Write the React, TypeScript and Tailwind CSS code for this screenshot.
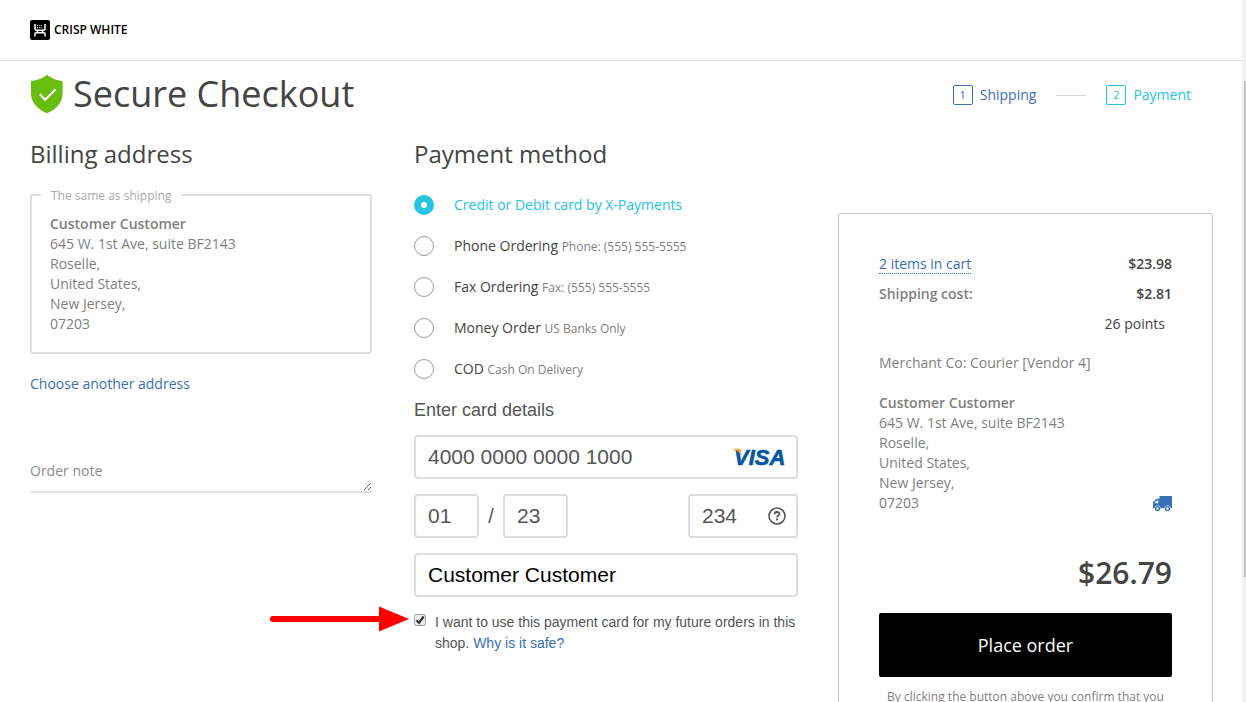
import { useState } from 'react';

const addressLines = ['645 W. 1st Ave, suite BF2143', 'Roselle,', 'United States,', 'New Jersey,', '07203'];

const paymentMethods = [
  { id: 'xpayments', name: 'Credit or Debit card by X-Payments', note: '' },
  { id: 'phone', name: 'Phone Ordering', note: 'Phone: (555) 555-5555' },
  { id: 'fax', name: 'Fax Ordering', note: 'Fax: (555) 555-5555' },
  { id: 'money', name: 'Money Order', note: 'US Banks Only' },
  { id: 'cod', name: 'COD', note: 'Cash On Delivery' },
];

const cardInput =
  'h-11 rounded border-2 border-[#dddddd] bg-white pl-3 font-["Liberation_Sans",sans-serif] text-[21px] outline-none';

// Icons
const LogoIcon = () => (
  <svg width="20" height="20" viewBox="0 0 20 20" fill="none" aria-hidden="true">
    <rect width="20" height="20" rx="2" fill="#000" />
    <g stroke="#fff" strokeWidth="1.5">
      <path d="M5 4v4.500c0 1.300.8 1.700 2 1.700h6c1.200 0 2-.4 2-1.700V4" />
      <path d="M7.800 10.200c0 2.200-.8 2.800-2.800 3v3.400M12.200 10.200c0 2.200.8 2.800 2.800 3v3.400M6.500 12.800h7" strokeWidth="1.400" />
      <path d="M7 5.500h6M7 7.600h6" stroke="#aaa" strokeWidth="1.200" strokeDasharray="1.200 .8" />
    </g>
  </svg>
);

const ShieldIcon = () => (
  <svg width="33" height="40" viewBox="0 0 33 40" fill="none" aria-hidden="true">
    <path d="M17 .8C13 4 7 6.600 1 7v12.500C1 28.500 8 35.800 17 39.300c9-3.500 15.600-10.800 15.600-19.800V7C27 6.600 21 4 17 .8z" fill="#69bd0f" />
    <path d="M9.800 20.200l5.400 5.600 10.400-10.600" stroke="#fff" strokeWidth="2" />
  </svg>
);

const TruckIcon = () => (
  <svg width="20" height="18" viewBox="0 0 20 18" aria-hidden="true">
    <path d="M7.500 1H20v12.200H1V8.600L1.300 7l2.600-2.700L5 3.800h2.500z" fill="#3a6eb4" />
    <path d="M2.700 8.300v-.5l2.200-2.400h1.300v2.900z" fill="#fff" />
    <circle cx="5.500" cy="13.500" r="3" fill="#fff" />
    <circle cx="15.500" cy="13.500" r="3" fill="#fff" />
    <circle cx="5.500" cy="13.500" r="1.900" fill="none" stroke="#3a6eb4" strokeWidth="1.400" />
    <circle cx="15.500" cy="13.500" r="1.900" fill="none" stroke="#3a6eb4" strokeWidth="1.400" />
  </svg>
);

const VisaLogo = () => (
  <svg width="56" height="24" viewBox="0 0 56 24" role="img" aria-label="VISA">
    <text x="2" y="18" className='font-["Liberation_Sans",sans-serif] text-[22px] font-bold italic' fill="#0157a2" stroke="#0157a2" strokeWidth=".6">
      VISA
    </text>
    <path d="M0 1.800h6.800c1.200 0 1.800.5 2 1.500L9.800 9C8 5.600 5 3.100 0 1.800z" fill="#f9a533" />
  </svg>
);

const Arrow = () => (
  <svg className="pointer-events-none absolute -left-36 -top-2" width="139" height="26" viewBox="0 0 139 26" aria-hidden="true">
    <path d="M3 13h108" stroke="#f00" strokeWidth="6" strokeLinecap="round" />
    <path d="M109 0.500L139 13l-30 12.500z" fill="#f00" />
  </svg>
);

const Address = () => (
  <address className="text-sm leading-5 text-[#7f7f7f] not-italic">
    <strong className="font-semibold">Customer Customer</strong>
    {addressLines.map((line) => (
      <div key={line}>{line}</div>
    ))}
  </address>
);

const Steps = () => (
  <nav className="flex items-center pt-0.5 text-sm">
    <a href="#shipping" className="flex items-center gap-[7px] text-[#3a6eb4]">
      <span className="flex size-5 items-center justify-center rounded-xs border border-current text-[11px]">1</span>
      Shipping
    </a>
    <span className="mx-5 h-px w-[30px] bg-[#d9d9d9]" />
    <a href="#payment" className="flex items-center gap-[7px] text-[#25c4e0]">
      <span className="flex size-5 items-center justify-center rounded-xs border border-current text-[11px]">2</span>
      Payment
    </a>
  </nav>
);

const BillingAddress = () => (
  <section className="pr-0.5">
    <h2 className="text-2xl leading-8">Billing address</h2>
    <fieldset className="mt-[17px] rounded-xs border-2 border-[#e0e0e0]">
      <legend className="ml-[9px] px-2.5 pt-px text-xs leading-[15px] text-[#aaaaaa]">The same as shipping</legend>
      <div className="px-[18px] pt-[11px] pb-[18px]">
        <Address />
      </div>
    </fieldset>
    <a href="#addresses" className="mt-5 block text-sm leading-5 text-[#3a6eb4]">
      Choose another address
    </a>
    <textarea
      aria-label="Order note"
      placeholder="Order note"
      className="mt-[67px] block h-8 w-full resize-y overflow-hidden rounded-xs border-b-2 border-[#e0e0e0] text-sm leading-5 outline-none placeholder:text-[#8b8b8b]"
    />
  </section>
);

const PaymentMethod = () => {
  const [method, setMethod] = useState('xpayments');
  const [saveCard, setSaveCard] = useState(true);

  return (
    <section>
      <h2 className="text-2xl leading-8">Payment method</h2>
      <div className="mt-3.5">
        {paymentMethods.map(({ id, name, note }) => (
          <label key={id} className="flex h-[41px] items-center gap-5 text-sm has-checked:text-[#25c4e0]">
            <input
              type="radio"
              name="method"
              checked={method === id}
              onChange={() => setMethod(id)}
              className="size-5 appearance-none rounded-full border border-[#999999] checked:border-[7px] checked:border-[#25c4e0]"
            />
            <span className="pt-px">
              {name} {note && <small className="text-xs text-[#7f7f7f]">{note}</small>}
            </span>
          </label>
        ))}
      </div>

      <div className='font-["Liberation_Sans",sans-serif] text-[#555555]'>
        <h3 className="mt-2 text-lg leading-[27px]">Enter card details</h3>
        <div className="relative mt-[11px]">
          <input aria-label="Card number" defaultValue="4000 0000 0000 1000" className={`${cardInput} w-full`} />
          <span className="absolute top-3 right-2.5">
            <VisaLogo />
          </span>
        </div>
        <div className="mt-[15px] flex items-center">
          <input aria-label="Month" defaultValue="01" className={`${cardInput} w-[65px]`} />
          <span className="w-6 text-center text-xl">/</span>
          <input aria-label="Year" defaultValue="23" className={`${cardInput} w-[65px]`} />
          <div className="relative ml-auto">
            <input aria-label="CVV" defaultValue="234" className={`${cardInput} w-[110px]`} />
            <button type="button" aria-label="?" className="absolute top-[13px] right-3">
              <svg width="18" height="18" viewBox="0 0 18 18" fill="none" stroke="#555" aria-hidden="true">
                <circle cx="9" cy="9" r="8" strokeWidth="1.600" />
                <path d="M6.600 7.200c0-1.500 1-2.200 2.400-2.200s2.400.7 2.400 2c0 1.700-2.300 1.500-2.300 3.400" strokeWidth="1.800" />
                <path d="M8.100 12.500H10" strokeWidth="1.900" />
              </svg>
            </button>
          </div>
        </div>
        <input aria-label="Name on card" defaultValue="Customer Customer" className={`${cardInput} mt-[15px] w-full text-black`} />

        <div className="relative mt-[17px] flex gap-[9px] text-sm leading-[21px]">
          <Arrow />
          <span className="relative size-3 shrink-0">
            <input
              id="save-card"
              type="checkbox"
              checked={saveCard}
              onChange={(e) => setSaveCard(e.target.checked)}
              className="peer block size-3 appearance-none rounded-xs border border-[#a8a8a8] bg-[#e9e9e9]"
            />
            <svg className="pointer-events-none absolute inset-0 hidden peer-checked:block" width="12" height="12" viewBox="0 0 12 12" fill="none" stroke="#333" strokeWidth="2.200">
              <path d="M2.500 6.300L5 8.800l4.600-6.300" />
            </svg>
          </span>
          <p className="-mt-0.5">
            <label htmlFor="save-card">I want to use this payment card for my future orders in this shop.</label>{' '}
            <a href="#safe" className="text-[#3a6eb4]">
              Why is it safe?
            </a>
          </p>
        </div>
      </div>
    </section>
  );
};

const OrderSummary = () => (
  <aside className="mt-[75px] rounded-xs border border-[#c4c4c4] p-10 text-sm leading-5">
    <div className="flex flex-col gap-2.5">
      <div className="flex justify-between">
        <a href="#cart" className="border-b border-dotted border-[#3a6eb4] leading-[19px] text-[#3a6eb4]">
          2 items in cart
        </a>
        <span className="font-semibold">$23.98</span>
      </div>
      <div className="flex justify-between font-semibold">
        <span className="text-[#7f7f7f]">Shipping cost:</span>
        <span>$2.81</span>
      </div>
      <div className="pr-[7px] text-right">26 points</div>
    </div>
    <p className="mt-[19px] mb-5 text-[#7f7f7f]">Merchant Co: Courier [Vendor 4]</p>
    <div className="flex items-end justify-between">
      <Address />
      <TruckIcon />
    </div>
    <p className="mt-10 text-right text-3xl leading-10 font-semibold">$26.79</p>
    <button type="button" className="mt-5 h-16 w-full rounded-xs bg-black text-lg text-white">
      Place order
    </button>
    <p className="mt-3 text-center text-xs leading-4 text-[#7f7f7f]">By clicking the button above you confirm that you</p>
  </aside>
);

const App = () => {
  return (
    <div className='flex h-screen overflow-hidden bg-white font-["Open_Sans",sans-serif] text-[#444444]'>
      <div className="min-w-0 flex-1">
        <header className="flex h-[61px] items-center gap-1 border-b border-[#e0e0e0] pl-[30px] text-xs font-semibold text-black">
          <LogoIcon />
          CRISP WHITE
        </header>
        <main className="pr-[29px] pl-[30px]">
          <div className="flex h-[66px] items-center justify-between pr-[22px]">
            <h1 className="flex items-center gap-2.5 text-4xl">
              <ShieldIcon />
              Secure Checkout
            </h1>
            <Steps />
          </div>
          <div className="grid grid-cols-[344fr_384fr_375fr] items-start gap-10 pt-[11px]">
            <BillingAddress />
            <PaymentMethod />
            <OrderSummary />
          </div>
        </main>
      </div>
      {/* Scrollbar */}
      <div className="w-1 bg-[#f1f1f1] pt-[81px] pl-0.5">
        <div className="h-[496px] bg-[#c1c1c1]" />
      </div>
    </div>
  );
};

export default App;
